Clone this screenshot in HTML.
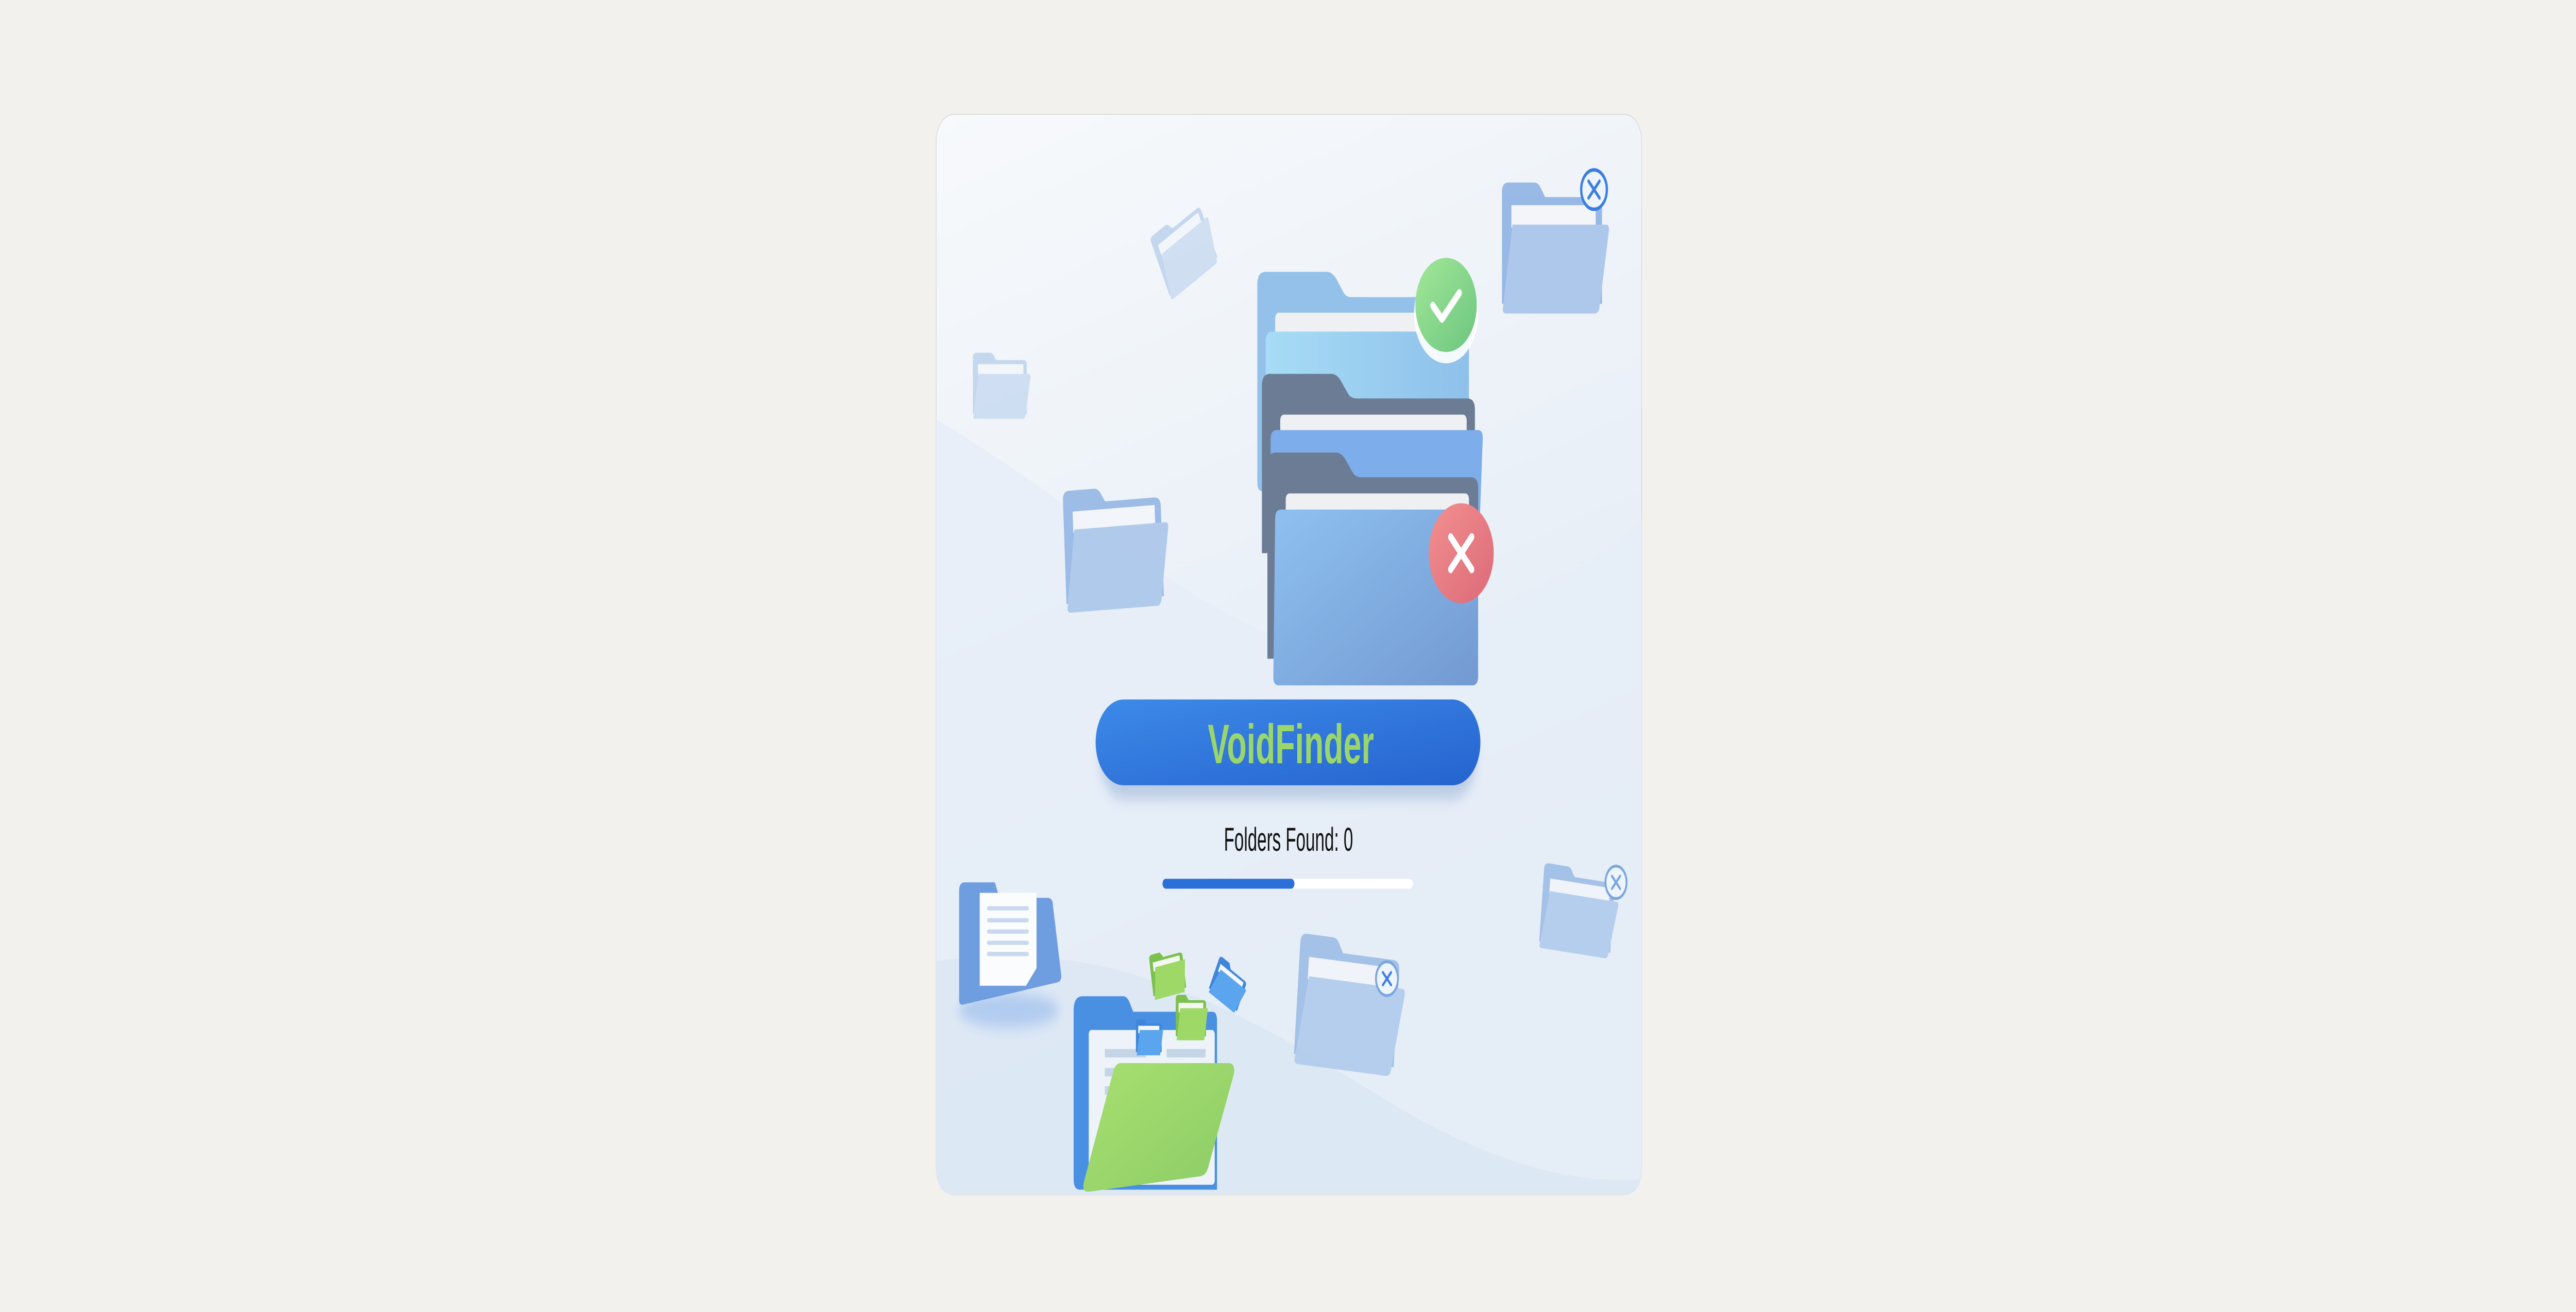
<!DOCTYPE html>
<html><head><meta charset="utf-8"><style>
html,body{margin:0;padding:0;background:#f3f1ed;overflow:hidden;width:100vw;height:100vh;}
svg.page{display:block;width:100vw;height:100vh;}
</style></head><body>
<svg class="page" viewBox="0 0 7639 2546" preserveAspectRatio="none">
<rect x="0" y="0" width="7639" height="2546" fill="#f3f1ed"/>
<svg x="2760" y="200" width="2130" height="2140" viewBox="0 0 1568 1568" preserveAspectRatio="none">
<defs>
<linearGradient id="cg" x1="0" y1="0" x2="0.3" y2="1"><stop offset="0" stop-color="#f7f9fb"/><stop offset="0.5" stop-color="#ebf1f8"/><stop offset="1" stop-color="#dee8f4"/></linearGradient>
<linearGradient id="btn" x1="0" y1="0" x2="1" y2="1"><stop offset="0" stop-color="#3d8ae8"/><stop offset="1" stop-color="#2563cf"/></linearGradient>
<linearGradient id="ff" x1="0" y1="0" x2="1" y2="1"><stop offset="0" stop-color="#8ec0f0"/><stop offset="1" stop-color="#739ad2"/></linearGradient>
<linearGradient id="ff2" x1="0" y1="0" x2="1" y2="0"><stop offset="0" stop-color="#a7dcf5"/><stop offset="1" stop-color="#8ec0ea"/></linearGradient>
<linearGradient id="gr" x1="0" y1="0" x2="1" y2="1"><stop offset="0" stop-color="#a2e898"/><stop offset="1" stop-color="#6cc57f"/></linearGradient>
<linearGradient id="rd" x1="0" y1="0" x2="1" y2="1"><stop offset="0" stop-color="#f29090"/><stop offset="1" stop-color="#dc6a78"/></linearGradient>
<linearGradient id="gf" x1="0" y1="0" x2="1" y2="1"><stop offset="0" stop-color="#a8e070"/><stop offset="1" stop-color="#8ccc66"/></linearGradient>
<filter id="sh" x="-20%" y="-20%" width="140%" height="160%"><feGaussianBlur stdDeviation="10"/></filter>
<g id="fo">
<path d="M0,12 Q0,0 12,0 H62 Q70,0 76,10 L82,18 H178 Q190,18 190,30 V150 H0 Z" fill="#8fb3e3"/>
<rect x="18" y="28" width="160" height="28" fill="#f4f6fa"/>
<path d="M20,52 H198 Q204,52 203,60 L185,155 Q183,162 176,162 H8 Q0,162 2,154 Z" fill="#a7c4ea"/>
</g>
<g id="mf">
<path d="M0,6 Q0,0 6,0 H22 L28,8 H60 Q66,8 66,14 V62 H0 Z" fill="#7cc04e"/>
<rect x="6" y="12" width="54" height="14" fill="#f4f8f0"/>
<path d="M10,20 H70 L62,68 H2 Z" fill="#9ed866"/>
</g>
<g id="mb">
<path d="M0,6 Q0,0 6,0 H22 L28,8 H60 Q66,8 66,14 V62 H0 Z" fill="#3d86dc"/>
<rect x="6" y="12" width="54" height="14" fill="#f4f8fc"/>
<path d="M10,20 H70 L62,68 H2 Z" fill="#5aa5ee"/>
</g>
</defs>
<rect x="12" y="16" width="1540" height="1536" rx="38" fill="url(#cg)" stroke="#dcdcdc" stroke-width="1.5"/>
<path d="M12,450 C300,560 520,700 760,760 C1050,820 1350,720 1552,590 V1514 Q1552,1552 1514,1552 H50 Q12,1552 12,1514 Z" fill="#e6eef8" opacity="0.8"/>
<path d="M12,1220 C400,1180 700,1300 1000,1420 C1200,1500 1400,1540 1552,1530 V1514 Q1552,1552 1514,1552 H50 Q12,1552 12,1514 Z" fill="#dae5f3" opacity="0.7"/>

<use href="#fo" transform="translate(1247,113) scale(1.15)" opacity="0.9"/>
<circle cx="1448" cy="123" r="28" fill="#eef4fb" stroke="#3b7ee0" stroke-width="5"/>
<path d="M1436,111 L1460,135 M1460,111 L1436,135" stroke="#3b7ee0" stroke-width="5" stroke-linecap="round"/>
<use href="#fo" transform="translate(478,192) rotate(-28) scale(0.62)" opacity="0.45"/>
<use href="#fo" transform="translate(92,355) scale(0.62 0.58)" opacity="0.45"/>
<use href="#fo" transform="translate(288,552) rotate(-3) scale(1.12 1.07)" opacity="0.85"/>
<use href="#fo" transform="translate(1340,1080) rotate(6) scale(0.82 0.75)" opacity="0.75"/>
<circle cx="1496" cy="1108" r="23" fill="#eef4fb" stroke="#7aa6df" stroke-width="4"/>
<path d="M1487,1099 L1505,1117 M1505,1099 L1487,1117" stroke="#7aa6df" stroke-width="4" stroke-linecap="round"/>
<use href="#fo" transform="translate(808,1180) rotate(5) scale(1.15)" opacity="0.75"/>
<circle cx="996" cy="1245" r="24" fill="#eef4fb" stroke="#7aa6df" stroke-width="4"/>
<path d="M987,1236 L1005,1254 M1005,1236 L987,1254" stroke="#3b7ee0" stroke-width="4" stroke-linecap="round"/>

<ellipse cx="170" cy="1290" rx="110" ry="25" fill="#9fc0ec" filter="url(#sh)" opacity="0.7"/>
<path d="M62,1120 Q62,1108 74,1108 H140 L150,1130 H255 Q267,1130 267,1142 L285,1240 Q286,1248 278,1250 L70,1282 Q62,1283 62,1275 Z" fill="#6f9ee0"/>
<path d="M107,1123 H231 V1230 L208,1255 H107 Z" fill="#fbfcfe"/>
<g stroke="#c8d8ef" stroke-width="6" stroke-linecap="round"><path d="M126,1145 H211 M126,1162 H211 M126,1178 H211 M126,1194 H211 M126,1210 H211"/></g>

<path d="M713,258 Q713,240 731,240 H865 Q878,240 888,253 L900,268 Q906,276 918,276 H1160 Q1175,276 1175,291 V540 Q1175,552 1163,552 H725 Q713,552 713,540 Z" fill="#93c1ea"/>
<rect x="752" y="298" width="420" height="40" rx="8" fill="#eef0f3"/>
<path d="M745,325 H1160 Q1175,325 1174,340 L1165,540 H731 L731,340 Q731,325 745,325 Z" fill="url(#ff2)"/>
<path d="M723,402 Q723,385 740,385 H875 Q888,385 898,398 L910,412 Q916,420 930,420 H1172 Q1188,420 1188,436 V640 H723 Z" fill="#6c7c95"/>
<rect x="763" y="443" width="407" height="35" rx="8" fill="#eef0f3"/>
<path d="M755,465 H1195 Q1206,465 1205,478 L1196,640 H742 L742,478 Q742,465 755,465 Z" fill="#7dadea"/>
<path d="M735,515 Q735,497 753,497 H885 Q898,497 908,510 L920,524 Q926,532 940,532 H1180 Q1195,532 1195,548 V790 H735 Z" fill="#6c7c95"/>
<rect x="775" y="555" width="400" height="38" rx="8" fill="#eef0f3"/>
<path d="M765,578 H1185 Q1195,578 1195,590 V815 Q1195,828 1182,828 H760 Q747,828 748,815 L752,590 Q752,578 765,578 Z" fill="url(#ff)"/>
<ellipse cx="1125" cy="300" rx="70" ry="70" fill="#fff" opacity="0.9"/>
<circle cx="1125" cy="287" r="67" fill="url(#gr)"/>
<path d="M1096,288 L1116,307 L1154,270" fill="none" stroke="#fff" stroke-width="11" stroke-linecap="round" stroke-linejoin="round"/>
<circle cx="1158" cy="640" r="71" fill="url(#rd)"/>
<path d="M1135,617 L1181,663 M1181,617 L1135,663" stroke="#fff" stroke-width="11" stroke-linecap="round"/>

<rect x="370" y="880" width="820" height="110" rx="55" fill="#9fb6d8" filter="url(#sh)" opacity="0.6"/>
<rect x="360" y="848" width="840" height="122" rx="61" fill="url(#btn)"/>
<rect x="506" y="1103" width="547" height="14" rx="7" fill="#fff"/>
<rect x="506" y="1103" width="288" height="14" rx="7" fill="#2b6fd8"/>

<path d="M312,1290 Q312,1270 332,1270 H420 Q430,1270 436,1282 L442,1292 H615 Q625,1292 625,1305 V1545 H325 Q312,1545 312,1530 Z" fill="#4a90e2"/>
<rect x="345" y="1318" width="275" height="220" rx="6" fill="#eef3f9"/>
<g fill="#c5d5e8"><rect x="380" y="1345" width="90" height="12"/><rect x="515" y="1345" width="85" height="12"/><rect x="380" y="1372" width="70" height="12"/><rect x="380" y="1398" width="40" height="12"/></g>
<use href="#mb" transform="translate(448,1303) scale(0.85 0.75)"/>
<use href="#mf" transform="translate(535,1268) scale(1 0.95)"/>
<path d="M414,1365 H650 Q665,1365 662,1380 L605,1515 Q600,1525 588,1526 L345,1548 Q330,1549 334,1535 L398,1378 Q403,1365 414,1365 Z" fill="url(#gf)"/>
<use href="#mf" transform="translate(476,1212) rotate(-10) scale(1.1 0.95)"/>
<use href="#mb" transform="translate(632,1212) rotate(28) scale(1.05 0.85)"/>
</svg>
<text x="3828" y="1481" text-anchor="middle" font-family="Liberation Sans, sans-serif" font-weight="bold" font-size="108" fill="#9ad66a" textLength="493" lengthAdjust="spacingAndGlyphs">VoidFinder</text>
<text x="3821" y="1651" text-anchor="middle" font-family="Liberation Sans, sans-serif" font-size="64" fill="#111" textLength="383" lengthAdjust="spacingAndGlyphs">Folders Found: 0</text>
</svg>
</body></html>
